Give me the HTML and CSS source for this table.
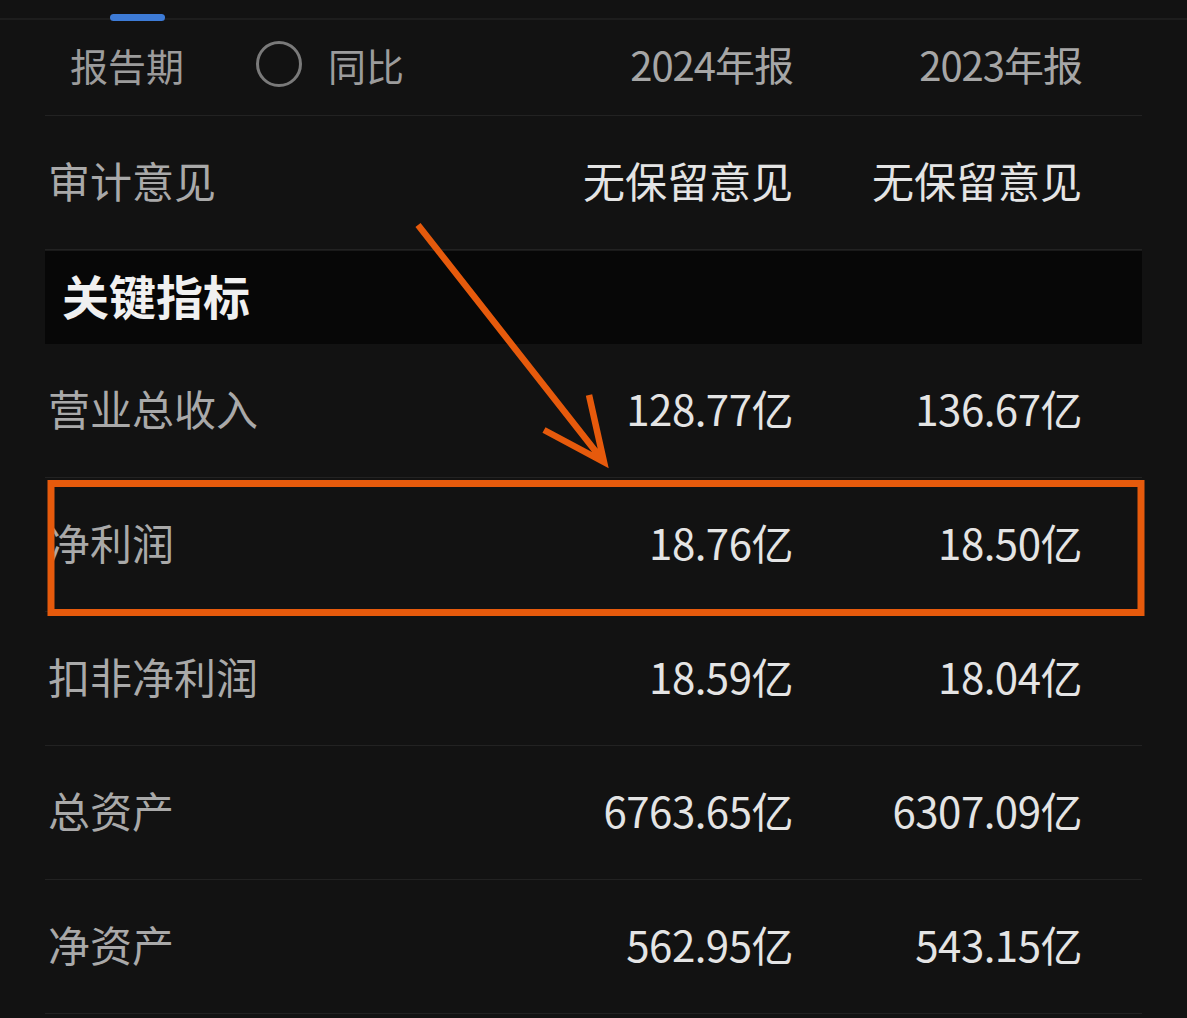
FILE: index.html
```html
<!DOCTYPE html>
<html lang="zh-CN">

<head>
    <meta charset="UTF-8">
    <meta name="viewport" content="width=device-width, initial-scale=1.0">
    <title>关键指标</title>
    <link rel="stylesheet" href="styles.css">
</head>

<body>
    <div class="tabbar">
        <span class="tab-indicator"></span>
    </div>

    <div class="table">
        <div class="row head">
            <div class="label">
                <span>报告期</span>
                <span class="radio"></span>
                <span>同比</span>
            </div>
            <div class="num">2024年报</div>
            <div class="num">2023年报</div>
        </div>

        <div class="row">
            <div class="label">审计意见</div>
            <div class="val">无保留意见</div>
            <div class="val">无保留意见</div>
        </div>

        <div class="section">关键指标</div>

        <div class="row">
            <div class="label">营业总收入</div>
            <div class="num">128.77亿</div>
            <div class="num">136.67亿</div>
        </div>
        <div class="row">
            <div class="label">净利润</div>
            <div class="num">18.76亿</div>
            <div class="num">18.50亿</div>
        </div>
        <div class="row">
            <div class="label">扣非净利润</div>
            <div class="num">18.59亿</div>
            <div class="num">18.04亿</div>
        </div>
        <div class="row">
            <div class="label">总资产</div>
            <div class="num">6763.65亿</div>
            <div class="num">6307.09亿</div>
        </div>
        <div class="row">
            <div class="label">净资产</div>
            <div class="num">562.95亿</div>
            <div class="num">543.15亿</div>
        </div>
    </div>

    <!-- hand-drawn annotation on top of the screenshot -->
    <svg class="markup" width="1187" height="1018" viewBox="0 0 1187 1018">
        <rect x="51" y="483.5" width="1090" height="129" fill="none" stroke="#e65a0c" stroke-width="7" />
        <path d="M418 225 L604 462 M544 430 L604 462 L589 395" fill="none" stroke="#e65a0c" stroke-width="6.5"
            stroke-linecap="butt" stroke-linejoin="miter" />
    </svg>
</body>

</html>
```

FILE: styles.css
```css
html {
    font-family: "Noto Sans CJK SC", "Noto Sans", sans-serif;
    margin: 0;
}

* {
    box-sizing: border-box;
}

body {
    margin: 0;
    width: 1187px;
    height: 1018px;
    overflow: hidden;
    background: #121212;
    position: relative;
}

.tabbar {
    height: 20px;
    border-bottom: 2px solid #1d1d1d;
    position: relative;
}

.tab-indicator {
    position: absolute;
    left: 110px;
    top: 14px;
    width: 55px;
    height: 7px;
    border-radius: 4px;
    background: #3d7bd6;
}

.table {
    margin: 0 45px;
}

.row {
    display: grid;
    grid-template-columns: 1fr 250px 289px;
    align-items: center;
    height: 134px;
    padding-right: 60px;
    padding-bottom: 7px;
    border-bottom: 1px solid #222;
}

.row.head {
    height: 96px;
}

.label {
    font-size: 42px;
    color: #a9a9a9;
    padding-left: 3px;
}

.head .label {
    display: flex;
    align-items: center;
    padding-left: 25px;
    font-size: 38px;
    color: #9c9c9c;
}

.radio {
    width: 46px;
    height: 46px;
    border: 3px solid #7a7a7a;
    border-radius: 50%;
    margin: 0 26px 0 72px;
}

.num,
.val {
    text-align: right;
    color: #e4e4e4;
    font-size: 42px;
    white-space: nowrap;
}

.num {
    letter-spacing: -0.5px;
}

.head .num {
    font-size: 40px;
    letter-spacing: -1px;
    color: #a6a6a6;
}

.section {
    height: 94px;
    line-height: 88px;
    background: #070707;
    padding-left: 17px;
    font-size: 47px;
    font-weight: bold;
    color: #f0f0f0;
    border-top: 1px solid #1a1a1a;
}

.markup {
    position: absolute;
    left: 0;
    top: 0;
    pointer-events: none;
}
```
